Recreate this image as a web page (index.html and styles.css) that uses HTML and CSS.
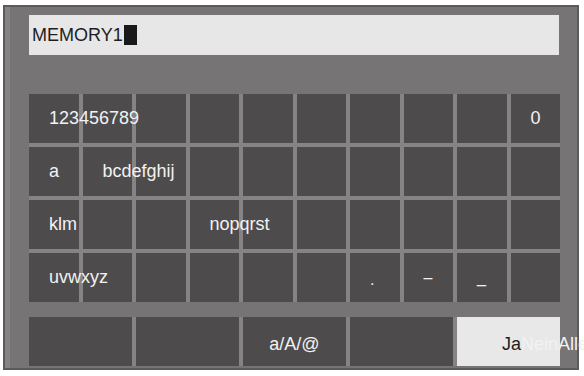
FILE: index.html
```html
<!DOCTYPE html>
<html lang="en">
<head>
    <meta charset="UTF-8">
    <title>Keyboard</title>
    <link rel="stylesheet" href="styles.css">
</head>
<body>
    <div class="panel">
        <div class="field">MEMORY1<span class="cursor"></span></div>

        <div class="keys">
            <div class="key"><span>123456789</span></div>
            <div class="key"></div>
            <div class="key"></div>
            <div class="key"></div>
            <div class="key"></div>
            <div class="key"></div>
            <div class="key"></div>
            <div class="key"></div>
            <div class="key"></div>
            <div class="key"><span>0</span></div>

            <div class="key"><span>a</span></div>
            <div class="key"><span>bcdefghij</span></div>
            <div class="key"></div>
            <div class="key"></div>
            <div class="key"></div>
            <div class="key"></div>
            <div class="key"></div>
            <div class="key"></div>
            <div class="key"></div>
            <div class="key"></div>

            <div class="key"><span>klm</span></div>
            <div class="key"></div>
            <div class="key"></div>
            <div class="key"><span>nopqrst</span></div>
            <div class="key"></div>
            <div class="key"></div>
            <div class="key"></div>
            <div class="key"></div>
            <div class="key"></div>
            <div class="key"></div>

            <div class="key"><span>uvwxyz</span></div>
            <div class="key"></div>
            <div class="key"></div>
            <div class="key"></div>
            <div class="key"></div>
            <div class="key"></div>
            <div class="key sym dot"><span>.</span></div>
            <div class="key sym"><span>&ndash;</span></div>
            <div class="key sym"><span>_</span></div>
            <div class="key"></div>
        </div>

        <div class="actions">
            <div class="key"></div>
            <div class="key"></div>
            <div class="key center"><span>a/A/@</span></div>
            <div class="key"></div>
            <div class="key confirm"><span><b class="yes">Ja</b>NeinAlle</span></div>
        </div>
    </div>
</body>
</html>
```

FILE: styles.css
```css
body {
    margin: 0;
    background: #ffffff;
    font-family: "Liberation Sans", Arial, sans-serif;
    width: 584px;
    height: 376px;
    overflow: hidden;
}
.panel {
    box-sizing: border-box;
    margin: 5px 0 0 3px;
    width: 576px;
    height: 365px;
    padding: 8px 17px 0 24px;
    background: #767474;
    border: 2px solid #5c5a5a;
    box-shadow: inset 5px 0 0 #868484;
}
.field {
    height: 40px;
    background: #e7e7e7;
    padding-left: 3px;
    font-size: 18px;
    color: #1e1e1e;
    display: flex;
    align-items: center;
    margin-right: 1px;
}
.cursor {
    display: inline-block;
    width: 13px;
    height: 20px;
    background: #1a1a1a;
    margin-left: 1px;
}
.keys {
    margin-top: 39px;
    display: grid;
    grid-template-columns: repeat(10, minmax(0, 1fr));
    grid-auto-rows: 49px;
    gap: 4px;
    background: #858383;
}
.actions {
    margin-top: 15px;
    display: grid;
    grid-template-columns: repeat(5, minmax(0, 1fr));
    grid-auto-rows: 49px;
    gap: 4px;
    background: #858383;
}
.key {
    min-width: 0;
    background: #4e4b4c;
    color: #f2f2f2;
    font-size: 18px;
    white-space: nowrap;
    display: flex;
    align-items: center;
    padding-left: 20px;
}
.key span {
    position: relative;
    z-index: 2;
}
.key.center {
    padding-left: 0;
    justify-content: center;
    padding-top: 6px;
}
.sym {
    font-size: 16px;
}
.dot {
    padding-top: 4px;
}
.confirm {
    background: #e8e8e8;
    padding-left: 45px;
    padding-top: 6px;
}
.yes {
    font-weight: normal;
    color: #1e1e1e;
}
```
